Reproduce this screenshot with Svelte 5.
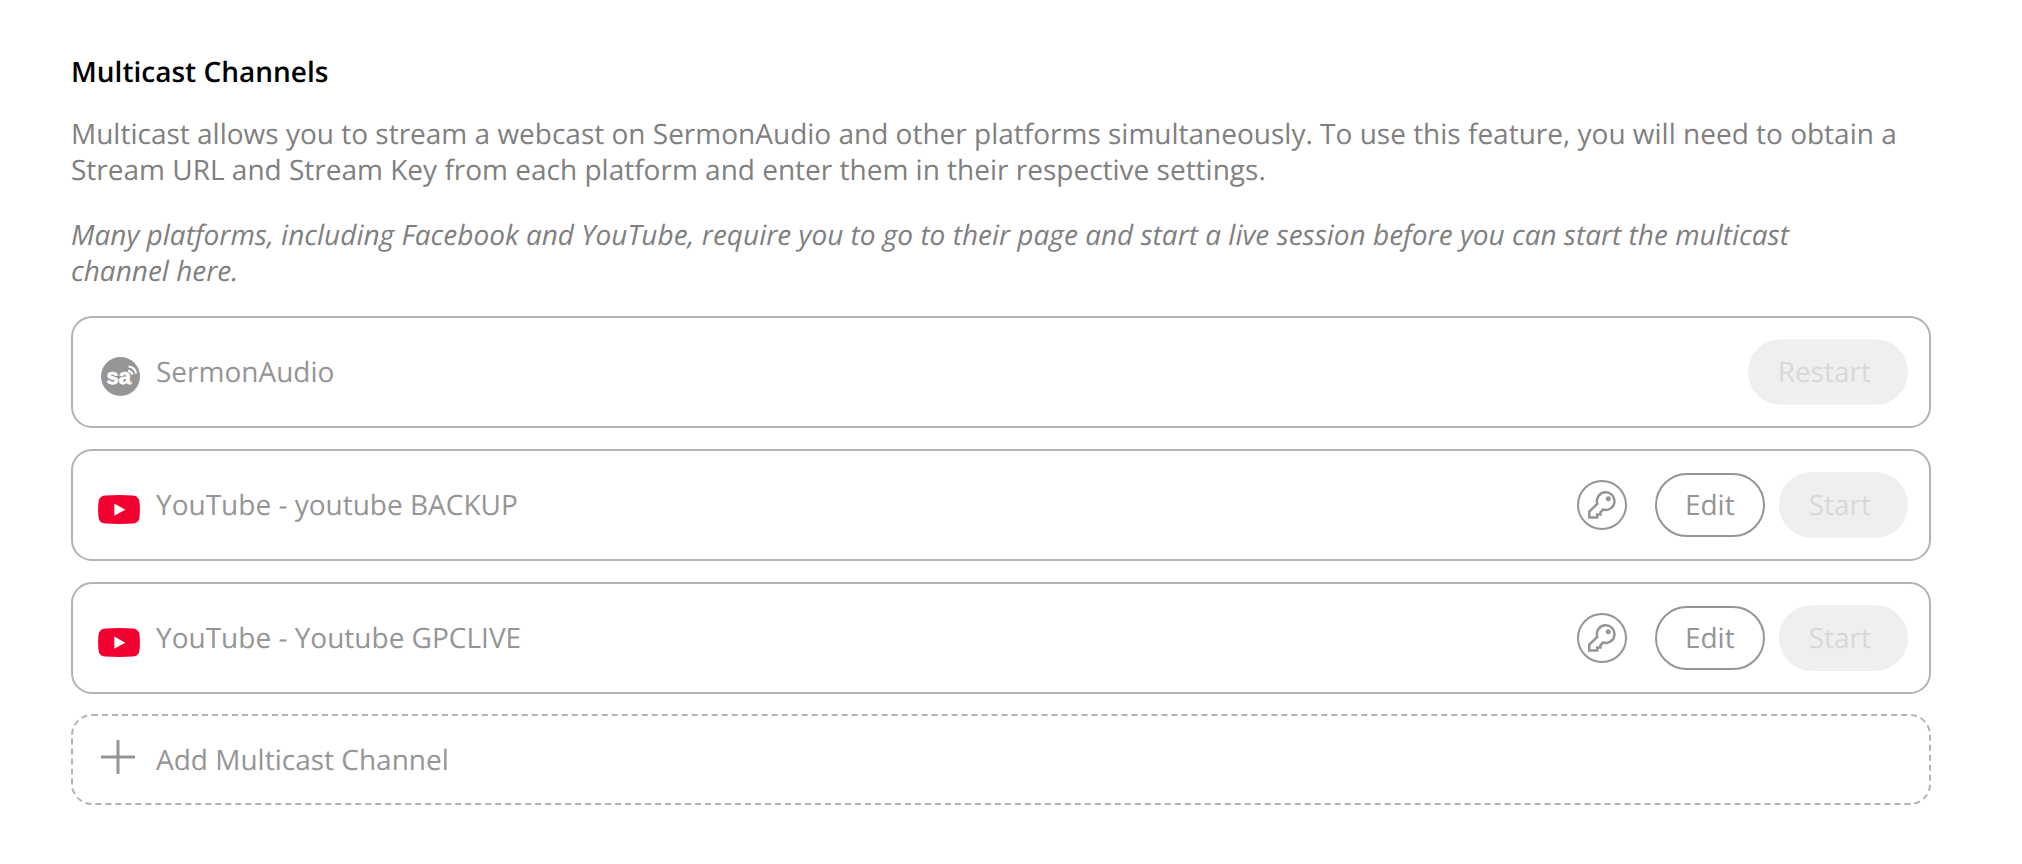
<script>
  const channels = [
    { name: 'SermonAudio', platform: 'sermonaudio', action: 'Restart', editable: false },
    { name: 'YouTube - youtube BACKUP', platform: 'youtube', action: 'Start', editable: true },
    { name: 'YouTube - Youtube GPCLIVE', platform: 'youtube', action: 'Start', editable: true }
  ];
</script>

<main>
  <h1>Multicast Channels</h1>
  <p>
    Multicast allows you to stream a webcast on SermonAudio and other platforms simultaneously. To
    use this feature, you will need to obtain a Stream URL and Stream Key from each platform and
    enter them in their respective settings.
  </p>
  <p class="note">
    Many platforms, including Facebook and YouTube, require you to go to their page and start a live
    session before you can start the multicast channel here.
  </p>

  <ul>
    {#each channels as channel}
      <li>
        <span class="logo">
          {#if channel.platform === 'youtube'}
            <svg width="42" height="29" viewBox="0 0 42 29" aria-hidden="true">
              <path d="M7 .5Q21-.3 35 .5Q40.900 1 41.500 7Q42.300 14.500 41.500 22Q40.900 28 35 28.500Q21 29.300 7 28.500Q1.100 28 .5 22Q-.3 14.500 .5 7Q1.100 1 7 .5Z" fill="#f2002f" />
              <path d="M16.300 8.600v12.200l11-6.100z" fill="#fff" />
            </svg>
          {:else}
            <svg class="inset" width="39" height="39" viewBox="0 0 39 39" aria-hidden="true">
              <circle cx="19.500" cy="19.500" r="19.500" fill="#959595" />
              <text x="5.500" y="26.700" font-family="Liberation Sans, Arial, sans-serif" font-weight="700" font-size="22" fill="#fff" stroke="#fff" stroke-width=".7">sa</text>
              <path d="M27 13.800q3.600 .4 4.500 3.800M27.500 9.500q6.300 .7 7.700 7" fill="none" stroke="#fff" stroke-width="2.200" />
            </svg>
          {/if}
        </span>
        <span class="name">{channel.name}</span>
        {#if channel.editable}
          <button class="key" aria-label="Stream key">
            <svg width="28" height="28" viewBox="0 0 28 28" aria-hidden="true">
              <path d="M9.300 12.800A8.800 8.800 0 1 1 15 18.500L12.500 21.300V23.600H9.200V26.600H1.300V20.500L9.300 12.800Z" fill="none" stroke="currentColor" stroke-width="2.500" />
              <circle cx="20.300" cy="7.700" r="2.500" fill="currentColor" />
            </svg>
          </button>
          <button class="edit">Edit</button>
        {/if}
        <button class="action" disabled>{channel.action}</button>
      </li>
    {/each}
  </ul>

  <button class="add">
    <span class="plus">
      <svg width="34" height="34" viewBox="0 0 34 34" aria-hidden="true">
        <path d="M17 1v32M1 17h32" fill="none" stroke="currentColor" stroke-width="3" stroke-linecap="round" />
      </svg>
    </span>
    Add Multicast Channel
  </button>
</main>

<style>
  :global(body) {
    margin: 0;
    background: #fff;
  }

  main {
    padding: 54px 91px 54px 71px;
    font: 400 28px/36px 'Open Sans', 'Noto Sans', sans-serif;
    text-rendering: geometricPrecision;
    color: #808080;
  }

  h1 {
    margin: 0 0 26px;
    font-size: 28px;
    font-weight: 600;
    color: #000;
  }

  p {
    margin: 0 0 29px;
  }

  .note {
    margin-bottom: 27px;
    padding-right: 80px;
    font-style: italic;
  }

  ul {
    display: grid;
    gap: 21px;
    margin: 0 0 20px;
    padding: 0;
    list-style: none;
  }

  li {
    display: flex;
    align-items: center;
    box-sizing: border-box;
    min-height: 112px;
    padding: 0 21px 0 25px;
    border: 2px solid #b3b3b3;
    border-radius: 21px;
    color: #959595;
  }

  button {
    font: inherit;
    text-rendering: inherit;
    color: #959595;
    background: none;
    cursor: pointer;
  }

  .logo {
    display: flex;
    width: 58px;
    padding-top: 8px;
  }

  .inset {
    margin-left: 3px;
  }

  .name {
    flex: 1;
  }

  .key {
    display: grid;
    place-items: center;
    width: 50px;
    height: 50px;
    margin-right: 28px;
    padding: 0;
    border: 2px solid #959595;
    border-radius: 50%;
  }

  .edit {
    height: 64px;
    margin-right: 14px;
    padding: 0 28px;
    border: 2px solid #959595;
    border-radius: 32px;
  }

  .action {
    height: 66px;
    padding: 0 37px 0 30px;
    border: 0;
    border-radius: 33px;
    color: #d8d8d8;
    background: #efefef;
    cursor: default;
  }

  .add {
    display: flex;
    align-items: center;
    width: 100%;
    min-height: 91px;
    padding: 0 25px;
    border: 2px dashed #b3b3b3;
    border-radius: 21px;
    text-align: left;
  }

  .plus {
    display: flex;
    width: 55px;
    padding: 0 0 6px 3px;
  }
</style>
